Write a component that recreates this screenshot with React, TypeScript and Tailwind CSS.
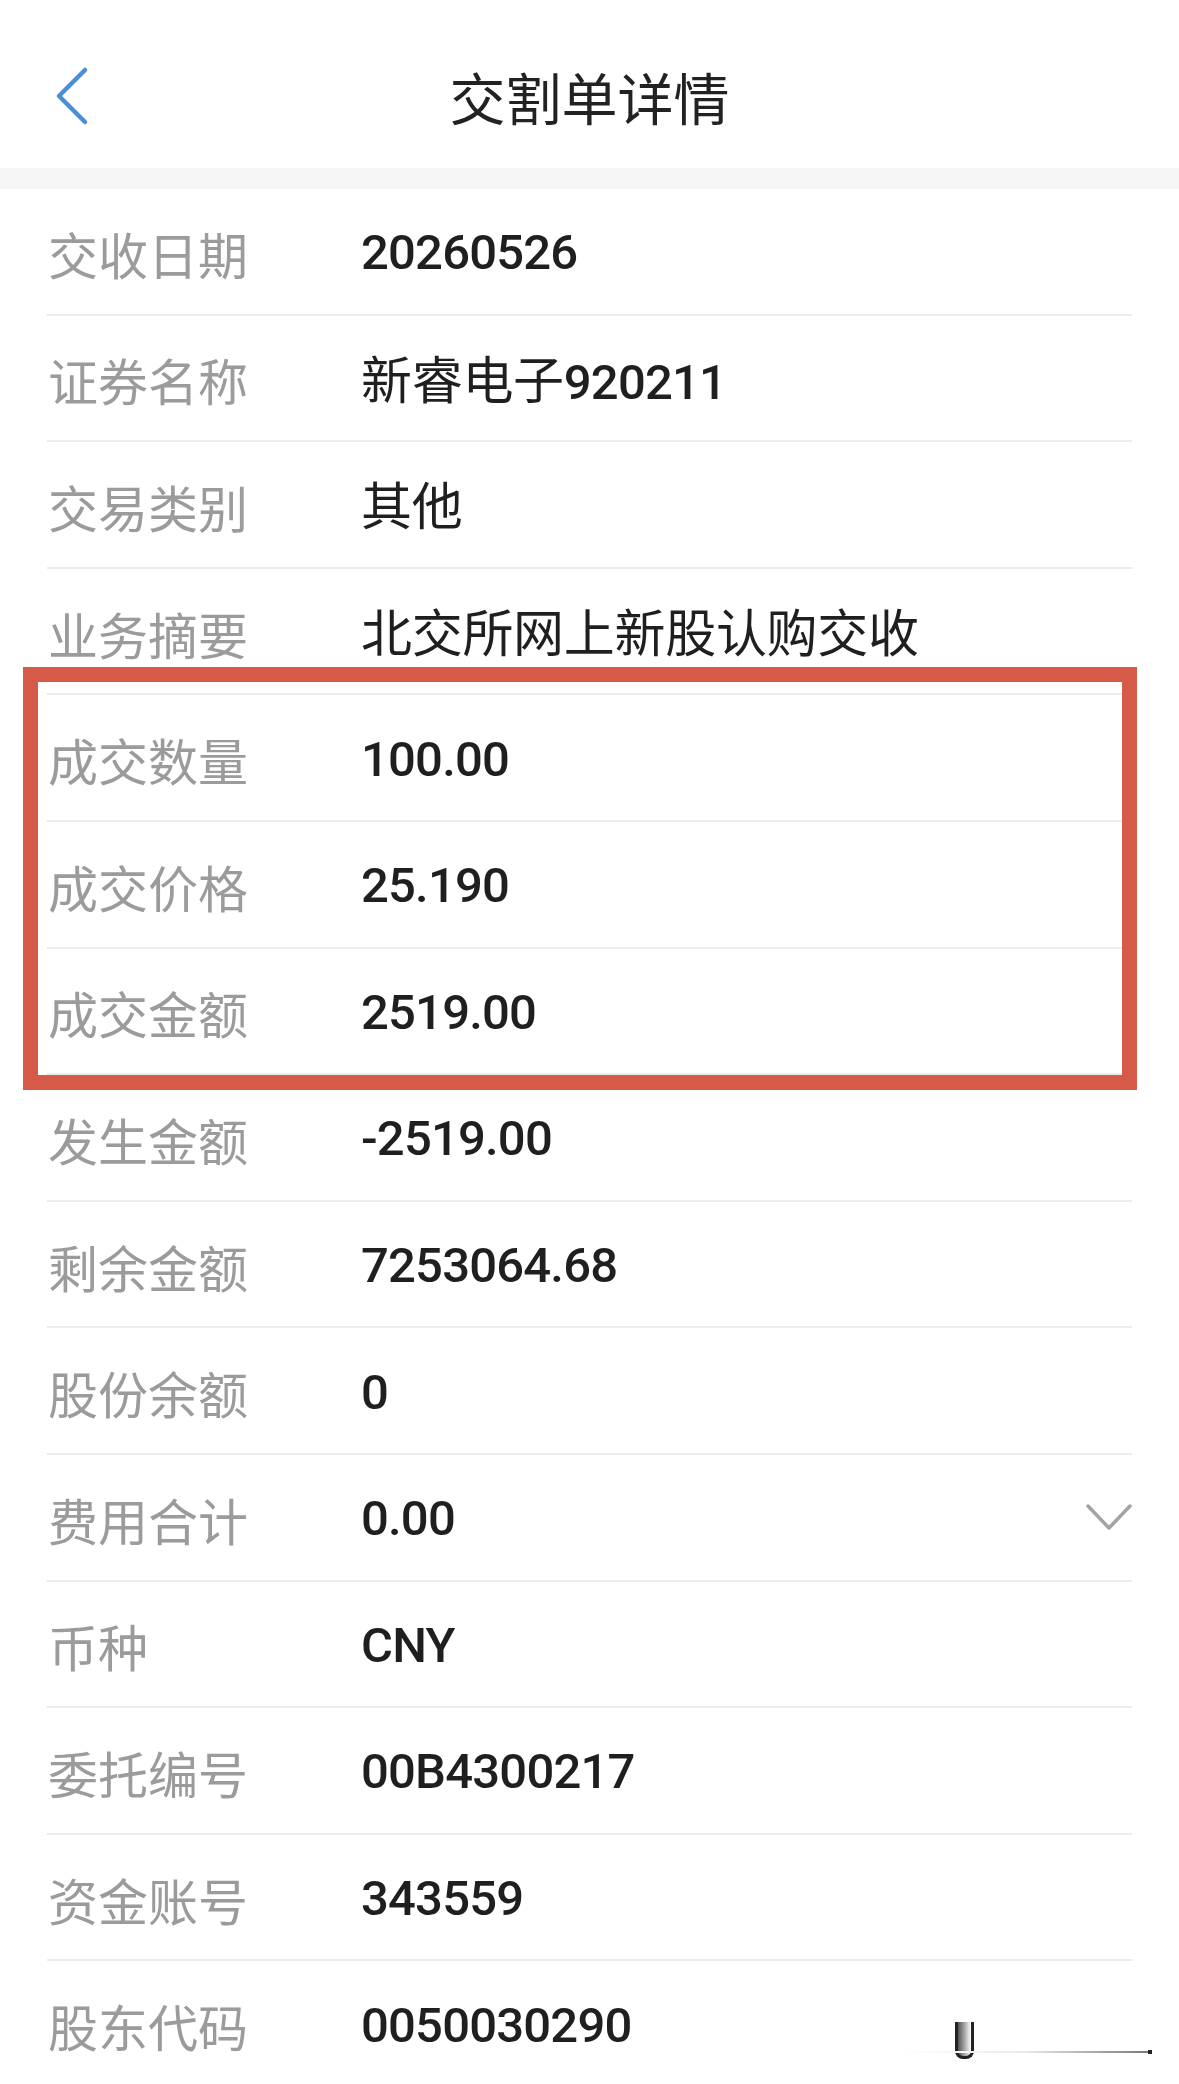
const ROWS: { label: string; value: string; expand?: boolean }[] = [
  { label: '交收日期', value: '20260526' },
  { label: '证券名称', value: '新睿电子920211' },
  { label: '交易类别', value: '其他' },
  { label: '业务摘要', value: '北交所网上新股认购交收' },
  { label: '成交数量', value: '100.00' },
  { label: '成交价格', value: '25.190' },
  { label: '成交金额', value: '2519.00' },
  { label: '发生金额', value: '-2519.00' },
  { label: '剩余金额', value: '7253064.68' },
  { label: '股份余额', value: '0' },
  { label: '费用合计', value: '0.00', expand: true },
  { label: '币种', value: 'CNY' },
  { label: '委托编号', value: '00B4300217' },
  { label: '资金账号', value: '343559' },
  { label: '股东代码', value: '0050030290' },
];

function BackIcon() {
  return (
    <svg width="36" height="60" viewBox="0 0 36 60" fill="none">
      <path d="M30 4 L4 30 L30 56" stroke="#4a8fd6" strokeWidth="4.5" strokeLinecap="round" strokeLinejoin="round" />
    </svg>
  );
}

function ChevronDown() {
  return (
    <svg width="48" height="28" viewBox="0 0 48 28" fill="none">
      <path d="M3 3 L24 25 L45 3" stroke="#a3a3a3" strokeWidth="3.5" strokeLinecap="round" strokeLinejoin="round" />
    </svg>
  );
}

// chinese runs are set a bit larger and in regular weight, like the app font
function Value({ text }: { text: string }) {
  const parts = text.split(/([\u4e00-\u9fff]+)/).filter(Boolean);
  return (
    <div className="text-[49px] leading-none tracking-[-0.8px] font-medium text-[#1f1f1f] font-['Roboto','Noto_Sans_CJK_SC',sans-serif]">
      {parts.map((p, i) =>
        /[\u4e00-\u9fff]/.test(p) ? (
          <span key={i} className="text-[51px] tracking-[-0.3px] font-normal font-['Noto_Sans_CJK_SC',sans-serif]">{p}</span>
        ) : (
          <span key={i}>{p}</span>
        )
      )}
    </div>
  );
}

export default function App() {
  return (
    <div className="relative w-[1179px] h-[2084px] overflow-hidden bg-white">
      {/* nav bar */}
      <div className="grid grid-cols-[200px_1fr_200px] items-center h-[168px] pt-[24px]">
        <div className="pl-[55px] flex items-center">
          <BackIcon />
        </div>
        <h1 className="text-center text-[56px] leading-none text-[#222] font-['Noto_Sans_CJK_SC',sans-serif]">
          交割单详情
        </h1>
        <div />
      </div>
      <div className="h-[21px] bg-[#f5f5f5]" />

      {/* detail rows */}
      <div>
        {ROWS.map(r => (
          <div key={r.label} className="mx-[47px] h-[126.6px] flex items-center border-b-2 border-[#ececec]">
            <div className="w-[314px] pl-[1px] pt-[3px] text-[50px] leading-none text-[#9b9b9b] font-['Noto_Sans_CJK_SC',sans-serif]">
              {r.label}
            </div>
            <div className="pt-[3px]">
              <Value text={r.value} />
            </div>
            {r.expand && (
              <div className="ml-auto -mr-[1px] flex items-center">
                <ChevronDown />
              </div>
            )}
          </div>
        ))}
      </div>

      {/* red annotation frame */}
      <div className="absolute left-[23px] top-[667px] w-[1114px] h-[423px] border-[15px] border-[#d65a48]" />

      {/* bottom-right screenshot artifact */}
      <div className="absolute left-[955px] top-[2022px] w-[19px] h-[37px] rounded-b-[8px] border-x-[3px] border-b-[3px] border-[#222] bg-gradient-to-r from-[#555] to-white" />
      <div className="absolute left-[900px] top-[2051px] w-[252px] h-[2px] bg-gradient-to-r from-white via-[#eaeaea] to-[#777]" />
      <div className="absolute left-[1148px] top-[2050px] w-[4px] h-[4px] bg-[#222]" />
    </div>
  );
}
